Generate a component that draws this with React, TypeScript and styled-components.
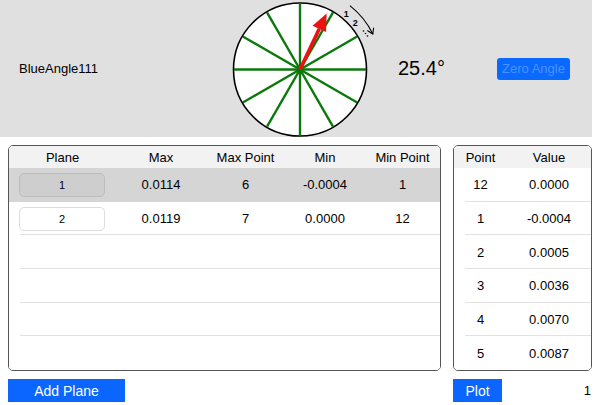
import React from 'react'
import styled, { createGlobalStyle } from 'styled-components'

const GlobalStyle = createGlobalStyle`
  body {
    margin: 0;
    background: #ffffff;
    font-family: "Liberation Sans", Arial, sans-serif;
    color: #000000;
  }
`

interface IPlane {
  plane: number
  max: string
  maxPoint: number
  min: string
  minPoint: number
}

const planes: IPlane[] = [
  { plane: 1, max: '0.0114', maxPoint: 6, min: '-0.0004', minPoint: 1 },
  { plane: 2, max: '0.0119', maxPoint: 7, min: '0.0000', minPoint: 12 },
]

const points = [
  { point: 12, value: '0.0000' },
  { point: 1, value: '-0.0004' },
  { point: 2, value: '0.0005' },
  { point: 3, value: '0.0036' },
  { point: 4, value: '0.0070' },
  { point: 5, value: '0.0087' },
]

const PLANE_COLUMNS = '107px 90px 79px 80px 1fr'
const POINT_COLUMNS = '53px 1fr'

function Dial({ angle }: { angle: number }) {
  const cx = 85
  const cy = 69.5
  const r = 66.5
  const polar = (deg: number, len: number) => {
    const rad = (deg * Math.PI) / 180
    return [cx + len * Math.sin(rad), cy - len * Math.cos(rad)]
  }
  const spokes = Array.from({ length: 12 }, (_, i) => i * 30)
  const [tx, ty] = polar(angle, 62)
  const [sx, sy] = polar(angle, 45)
  const rad = (angle * Math.PI) / 180
  const nx = Math.cos(rad)
  const ny = Math.sin(rad)
  const head = `${tx},${ty} ${sx + nx * 7.5},${sy + ny * 7.5} ${sx - nx * 7.5},${sy - ny * 7.5}`
  const [ax, ay] = polar(38, 81)
  const [bx, by] = polar(64, 81)
  const [l1x, l1y] = polar(40, 72)
  const [l2x, l2y] = polar(50, 72)
  return (
    <svg width="170" height="137" viewBox="0 0 170 137">
      <circle cx={cx} cy={cy} r={r} fill="#ffffff" stroke="#000000" strokeWidth="1.6" />
      {spokes.map((deg) => {
        const [x, y] = polar(deg, r - 0.5)
        return <line key={deg} x1={cx} y1={cy} x2={x} y2={y} stroke="#0b790b" strokeWidth="2.4" />
      })}
      <line x1={cx} y1={cy} x2={sx} y2={sy} stroke="#ee1111" strokeWidth="3.6" />
      <polygon points={head} fill="#ee1111" />
      <path d={`M ${ax} ${ay} A 81 81 0 0 1 ${bx} ${by}`} fill="none" stroke="#000000" strokeWidth="1.1" />
      <path d={`M ${bx - 5.5} ${by - 3.5} L ${bx} ${by} L ${bx + 0.8} ${by - 6.2}`} fill="none" stroke="#000000" strokeWidth="1.1" />
      <text x={l1x} y={l1y} fontSize="9" fontWeight="bold" textAnchor="middle" dominantBaseline="middle" fontFamily="Liberation Sans, Arial, sans-serif">1</text>
      <text x={l2x} y={l2y} fontSize="9" fontWeight="bold" textAnchor="middle" dominantBaseline="middle" fontFamily="Liberation Sans, Arial, sans-serif">2</text>
      <circle cx="148.5" cy="31" r="0.8" fill="#000000" />
      <circle cx="150.5" cy="33.5" r="0.8" fill="#000000" />
      <circle cx="152.5" cy="36" r="0.8" fill="#000000" />
    </svg>
  )
}

function App() {
  const emptyRows = 4
  return (
    <Page>
      <GlobalStyle />
      <TopPanel>
        <DeviceName>BlueAngle111</DeviceName>
        <Dial angle={25.4} />
        <AngleReadout>25.4°</AngleReadout>
        <ZeroButton>Zero Angle</ZeroButton>
      </TopPanel>
      <TablesRow>
        <TableBox width={433}>
          <HeaderRow columns={PLANE_COLUMNS}>
            <span>Plane</span>
            <span>Max</span>
            <span>Max Point</span>
            <span>Min</span>
            <span>Min Point</span>
          </HeaderRow>
          {planes.map((p, index) => (
            <DataRow key={p.plane} columns={PLANE_COLUMNS} selected={index === 0} separator={index !== 0}>
              <PlaneCell>
                <PlaneButton selected={index === 0}>{p.plane}</PlaneButton>
              </PlaneCell>
              <span>{p.max}</span>
              <span>{p.maxPoint}</span>
              <span>{p.min}</span>
              <span>{p.minPoint}</span>
            </DataRow>
          ))}
          {Array.from({ length: emptyRows }, (_, i) => (
            <DataRow key={`empty-${i}`} columns={PLANE_COLUMNS} separator={i < emptyRows - 1} />
          ))}
        </TableBox>
        <TableBox width={139}>
          <HeaderRow columns={POINT_COLUMNS}>
            <span>Point</span>
            <span>Value</span>
          </HeaderRow>
          {points.map((p, index) => (
            <DataRow key={p.point} columns={POINT_COLUMNS} separator={index < points.length - 1}>
              <span>{p.point}</span>
              <span>{p.value}</span>
            </DataRow>
          ))}
        </TableBox>
      </TablesRow>
      <BottomBar>
        <BlueButton width={117}>Add Plane</BlueButton>
        <BottomRight>
          <BlueButton width={49}>Plot</BlueButton>
          <PageNumber>1</PageNumber>
        </BottomRight>
      </BottomBar>
    </Page>
  )
}

export default App

const Page = styled.div`
  display: flex;
  flex-direction: column;
  width: 600px;
  height: 405px;
`

const TopPanel = styled.div`
  align-items: center;
  background: #e0e0e0;
  display: flex;
  flex-direction: row;
  height: 137px;
  width: 592px;
`

const DeviceName = styled.div`
  font-size: 13px;
  padding-left: 19px;
  width: 196px;
`

const AngleReadout = styled.div`
  font-size: 20px;
  padding-left: 13px;
  width: 99px;
`

const ZeroButton = styled.div`
  align-items: center;
  background: #0a6aff;
  border-radius: 3px;
  color: #4d92ff;
  display: flex;
  font-size: 13px;
  height: 22px;
  justify-content: center;
  width: 73px;
`

const TablesRow = styled.div`
  display: flex;
  flex-direction: row;
  gap: 12px;
  height: 226px;
  margin-top: 8px;
  padding-left: 8px;
`

const TableBox = styled.div<{ width: number }>`
  border: solid 1px #555555;
  border-radius: 5px;
  box-sizing: border-box;
  display: flex;
  flex-direction: column;
  overflow: hidden;
  width: ${({ width }) => width}px;
`

const HeaderRow = styled.div<{ columns: string }>`
  align-items: center;
  background: #f2f2f2;
  display: grid;
  font-size: 13px;
  grid-template-columns: ${({ columns }) => columns};
  height: 22px;
  text-align: center;
`

const DataRow = styled.div<{ columns: string; selected?: boolean; separator?: boolean }>`
  align-items: center;
  background-color: ${({ selected }) => (selected ? '#d5d5d5' : '#ffffff')};
  background-image: ${({ separator }) =>
    separator ? 'linear-gradient(#e2e2e2, #e2e2e2)' : 'none'};
  background-position: right bottom;
  background-repeat: no-repeat;
  background-size: calc(100% - 11px) 1px;
  display: grid;
  flex: 1;
  font-size: 13px;
  grid-template-columns: ${({ columns }) => columns};
  text-align: center;
`

const PlaneCell = styled.div`
  display: flex;
  padding-left: 10px;
`

const PlaneButton = styled.div<{ selected?: boolean }>`
  align-items: center;
  background: ${({ selected }) => (selected ? '#cecece' : '#ffffff')};
  border: solid 1px ${({ selected }) => (selected ? '#bcbcbc' : '#dcdcdc')};
  border-radius: 5px;
  box-sizing: border-box;
  display: flex;
  font-size: 11px;
  height: 24px;
  justify-content: center;
  width: 86px;
`

const BottomBar = styled.div`
  align-items: center;
  box-sizing: border-box;
  display: flex;
  flex-direction: row;
  justify-content: space-between;
  margin-top: 8px;
  padding-left: 8px;
  width: 592px;
`

const BottomRight = styled.div`
  align-items: center;
  display: flex;
  flex-direction: row;
  justify-content: space-between;
  padding-right: 1px;
  width: 139px;
  box-sizing: border-box;
`

const BlueButton = styled.div<{ width: number }>`
  align-items: center;
  background: #0a66ff;
  color: #ffffff;
  display: flex;
  font-size: 14px;
  height: 23px;
  justify-content: center;
  width: ${({ width }) => width}px;
`

const PageNumber = styled.div`
  font-size: 13px;
`
